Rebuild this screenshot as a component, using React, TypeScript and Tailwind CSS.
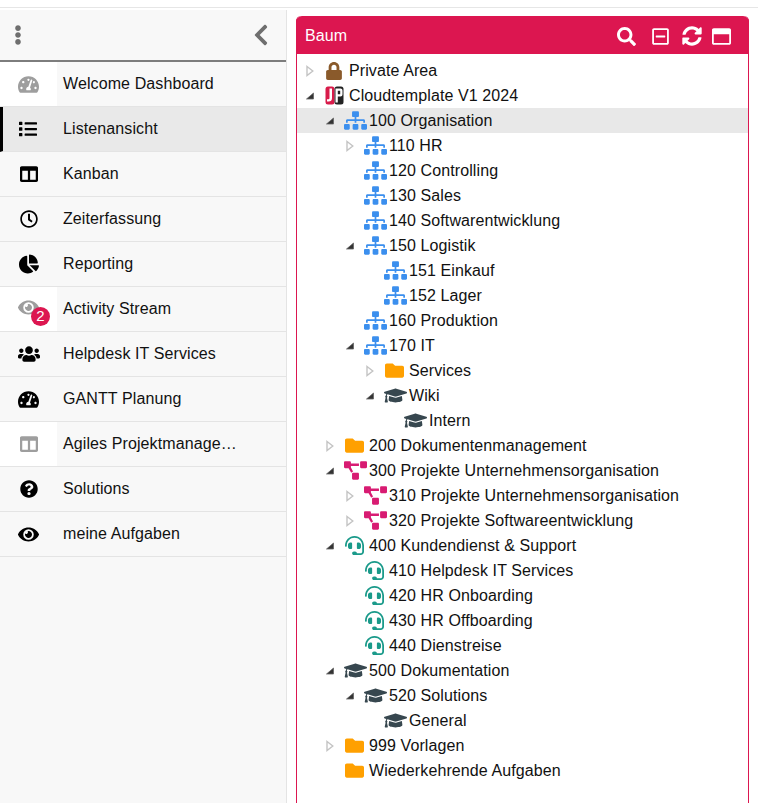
import React from "react";
import {
  FaTachometerAlt, FaList, FaColumns, FaRegClock, FaChartPie, FaEye, FaUsers, FaQuestionCircle,
  FaLock, FaSitemap, FaFolder, FaProjectDiagram, FaHeadset, FaGraduationCap, FaSearch,
  FaRegMinusSquare, FaSyncAlt, FaRegWindowMaximize, FaEllipsisV, FaChevronLeft,
} from "react-icons/fa";

type NavItem = { label: string; icon: React.ReactNode; muted?: boolean; active?: boolean; badge?: string };

const nav: NavItem[] = [
  { label: "Welcome Dashboard", icon: <FaTachometerAlt size={21} />, muted: true },
  { label: "Listenansicht", icon: <FaList size={18} />, active: true },
  { label: "Kanban", icon: <FaColumns size={18} /> },
  { label: "Zeiterfassung", icon: <FaRegClock size={18} /> },
  { label: "Reporting", icon: <FaChartPie size={20} /> },
  { label: "Activity Stream", icon: <FaEye size={21} className="-mt-[3px]" />, muted: true, badge: "2" },
  { label: "Helpdesk IT Services", icon: <FaUsers size={22} /> },
  { label: "GANTT Planung", icon: <FaTachometerAlt size={21} /> },
  { label: "Agiles Projektmanage…", icon: <FaColumns size={18} />, muted: true },
  { label: "Solutions", icon: <FaQuestionCircle size={18} /> },
  { label: "meine Aufgaben", icon: <FaEye size={21} /> },
];

type Kind = "lock" | "jp" | "org" | "folder" | "proj" | "head" | "grad";
type Row = { level: number; label: string; kind: Kind; tog?: "open" | "closed"; hl?: boolean };

const rows: Row[] = [
  { level: 0, label: "Private Area", kind: "lock", tog: "closed" },
  { level: 0, label: "Cloudtemplate V1 2024", kind: "jp", tog: "open" },
  { level: 1, label: "100 Organisation", kind: "org", tog: "open", hl: true },
  { level: 2, label: "110 HR", kind: "org", tog: "closed" },
  { level: 2, label: "120 Controlling", kind: "org" },
  { level: 2, label: "130 Sales", kind: "org" },
  { level: 2, label: "140 Softwarentwicklung", kind: "org" },
  { level: 2, label: "150 Logistik", kind: "org", tog: "open" },
  { level: 3, label: "151 Einkauf", kind: "org" },
  { level: 3, label: "152 Lager", kind: "org" },
  { level: 2, label: "160 Produktion", kind: "org" },
  { level: 2, label: "170 IT", kind: "org", tog: "open" },
  { level: 3, label: "Services", kind: "folder", tog: "closed" },
  { level: 3, label: "Wiki", kind: "grad", tog: "open" },
  { level: 4, label: "Intern", kind: "grad" },
  { level: 1, label: "200 Dokumentenmanagement", kind: "folder", tog: "closed" },
  { level: 1, label: "300 Projekte Unternehmensorganisation", kind: "proj", tog: "open" },
  { level: 2, label: "310 Projekte Unternehmensorganisation", kind: "proj", tog: "closed" },
  { level: 2, label: "320 Projekte Softwareentwicklung", kind: "proj", tog: "closed" },
  { level: 1, label: "400 Kundendienst & Support", kind: "head", tog: "open" },
  { level: 2, label: "410 Helpdesk IT Services", kind: "head" },
  { level: 2, label: "420 HR Onboarding", kind: "head" },
  { level: 2, label: "430 HR Offboarding", kind: "head" },
  { level: 2, label: "440 Dienstreise", kind: "head" },
  { level: 1, label: "500 Dokumentation", kind: "grad", tog: "open" },
  { level: 2, label: "520 Solutions", kind: "grad", tog: "open" },
  { level: 3, label: "General", kind: "grad" },
  { level: 1, label: "999 Vorlagen", kind: "folder", tog: "closed" },
  { level: 1, label: "Wiederkehrende Aufgaben", kind: "folder" },
];

function JpLogo() {
  return (
    <svg width="19" height="19" viewBox="0 0 19 19" aria-hidden="true">
      <rect x="0.500" y="0.500" width="9" height="18" rx="2.500" fill="#d81b4a" />
      <rect x="9.500" y="0.500" width="9" height="18" rx="2.500" fill="#222" />
      <path d="M4.500 2.500h2.500V12q0 3.500-3.500 3.500H2v-2.200h1.500q1 0 1-1.300z" fill="#fff" />
      <path d="M10.500 2.500h5q2 0 2 2v4q0 2-2 2h-2.700V16.500h-2.300z M12.800 4.700v3.600h2.400V4.700z" fill="#fff" fillRule="evenodd" />
    </svg>
  );
}

function NodeIcon({ kind }: { kind: Kind }) {
  switch (kind) {
    case "lock":
      return <FaLock size={18} color="#8a5a2b" />;
    case "jp":
      return <JpLogo />;
    case "org":
      return <FaSitemap size={23} color="#3b8fee" className="translate-x-[1px]" />;
    case "folder":
      return <FaFolder size={19} color="#ffa000" />;
    case "proj":
      return <FaProjectDiagram size={23} color="#d81b72" className="translate-x-[1px]" />;
    case "head":
      return <FaHeadset size={19} color="#1a9a8a" />;
    case "grad":
      return <FaGraduationCap size={23} color="#37474f" className="translate-x-[1px]" />;
  }
}

function Toggle({ state }: { state?: "open" | "closed" }) {
  if (!state) return <span className="w-[8px] shrink-0" />;
  return state === "closed" ? (
    <svg width="8" height="12" viewBox="0 0 8 12" className="shrink-0" aria-hidden="true">
      <path d="M1 1.500 6.800 6 1 10.500z" fill="#fff" stroke="#c4c4c4" strokeWidth="1.400" />
    </svg>
  ) : (
    <svg width="8" height="12" viewBox="0 0 8 12" className="shrink-0" aria-hidden="true">
      <path d="M0.500 9 7.500 3V9z" fill="#333" stroke="#666" strokeWidth="0.800" />
    </svg>
  );
}

const levelPad: Record<number, string> = {
  0: "pl-[9px]",
  1: "pl-[29px]",
  2: "pl-[49px]",
  3: "pl-[69px]",
  4: "pl-[89px]",
};

function TreeRow({ row }: { row: Row }) {
  return (
    <div className={`flex h-[25px] items-center ${levelPad[row.level]} ${row.hl ? "bg-[#e8e8e8]" : ""}`}>
      <Toggle state={row.tog} />
      <span className="ml-[8px] flex w-[24px] shrink-0 items-center justify-center">
        <NodeIcon kind={row.kind} />
      </span>
      <span className="ml-[3px] whitespace-nowrap text-[16px] tracking-[0.1px] text-[#111]">{row.label}</span>
    </div>
  );
}

export default function App() {
  return (
    <div className="h-[803px] w-[758px] overflow-hidden bg-white font-['Liberation_Sans',Arial,sans-serif]">
      <div className="mt-[7px] h-[3px] border-t border-[#e6e6e6]" />
      <div className="flex h-[793px]">
        <aside className="h-full w-[287px] shrink-0 border-r border-[#e4e4e4] bg-[#f8f8f8]">
          <div className="flex h-[52px] items-center justify-between border-b-2 border-[#7d7d7d] pl-[8px] pr-[13px] text-[#6f6f6f]">
            <FaEllipsisV size={20} />
            <FaChevronLeft size={24} />
          </div>
          {nav.map((item) => (
            <div
              key={item.label}
              className={`flex h-[45px] items-stretch border-b border-[#e4e4e4] ${item.active ? "border-l-[3px] border-l-black bg-[#e9e9e9]" : ""}`}
            >
              <div
                className={`relative flex shrink-0 items-center justify-center ${item.active ? "mr-[10px] w-[50px]" : "mr-[6px] w-[57px]"} ${item.muted ? "bg-white text-[#9e9e9e]" : "text-black"}`}
              >
                {item.icon}
                {item.badge && (
                  <span className="absolute left-[31px] top-[20px] flex h-[19px] w-[19px] items-center justify-center rounded-full bg-[#dc1650] text-[15px] text-white">
                    {item.badge}
                  </span>
                )}
              </div>
              <div className="flex items-center whitespace-nowrap text-[16px] tracking-[0.1px] text-[#111]">
                {item.label}
              </div>
            </div>
          ))}
        </aside>
        <main className="pl-[9px] pt-[6px]">
          <section className="h-[800px] w-[453px] rounded-t-[5px] border-x border-[#dc1650]">
            <header className="-mx-[1px] flex h-[38px] items-center justify-between rounded-t-[6px] bg-[#dc1650] pl-[9px] pr-[18px] pt-[2px] text-white">
              <span className="text-[16px] tracking-[0.1px]">Baum</span>
              <div className="flex items-center">
                <FaSearch size={19} />
                <FaRegMinusSquare size={19} className="ml-[15px]" />
                <FaSyncAlt size={20} className="ml-[12px]" />
                <FaRegWindowMaximize size={19} className="ml-[10px]" />
              </div>
            </header>
            <div className="pt-[4px]">
              {rows.map((row) => (
                <TreeRow key={row.label} row={row} />
              ))}
            </div>
          </section>
        </main>
      </div>
    </div>
  );
}
